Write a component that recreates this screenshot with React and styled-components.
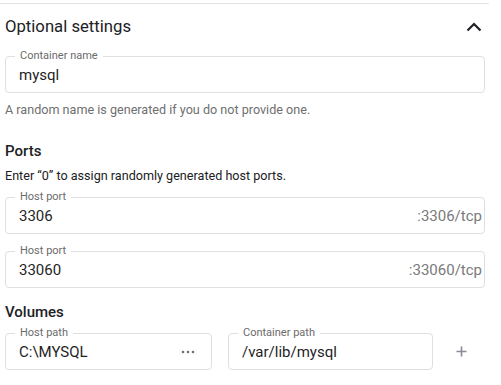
import React from 'react';
import styled, { createGlobalStyle } from 'styled-components';

const GlobalStyle = createGlobalStyle`
  body {
    margin: 0;
    background: #fff;
    font-family: Roboto, "Liberation Sans", Arial, sans-serif;
    color: #202124;
  }
`;

const Page = styled.div`
  width: 501px;
  height: 385px;
  overflow: hidden;
  padding: 3px 0 0 5px;
  box-sizing: border-box;
`;

const Divider = styled.div`
  height: 1px;
  width: 489px;
  margin-left: -5px;
  background: #e3e3e3;
`;

const Header = styled.div`
  display: flex;
  align-items: center;
  justify-content: space-between;
  width: 480px;
  margin-top: 13px;
  height: 20px;
`;

const Title = styled.h2`
  margin: 0;
  font-size: 16.7px;
  line-height: 20px;
  font-weight: 400;
  color: #202124;
`;

const Chevron = styled.svg`
  width: 16px;
  height: 10px;
  margin-right: 3px;
`;

const Section = styled.h3`
  margin: ${(p) => p.$top}px 0 0;
  font-size: 15px;
  line-height: 18px;
  font-weight: 500;
  color: #202124;
`;

const Note = styled.p`
  margin: ${(p) => p.$top}px 0 0;
  font-size: 12.6px;
  line-height: 16px;
  color: ${(p) => (p.$muted ? '#6f6f6f' : '#202124')};
`;

const Field = styled.div`
  position: relative;
  display: flex;
  align-items: center;
  box-sizing: border-box;
  width: ${(p) => p.$width || 480}px;
  height: 37px;
  margin-top: ${(p) => p.$top || 0}px;
  padding: 0 2px 0 13px;
  border: 1px solid #dfdfdf;
  border-radius: 4px;
  background: #fff;
`;

const Label = styled.span`
  position: absolute;
  left: 9px;
  top: -8px;
  padding: 0 5px;
  background: #fff;
  font-size: 11px;
  line-height: 13px;
  color: #6b6b6b;
`;

const Value = styled.span`
  flex: 1;
  font-size: 15px;
  line-height: 18px;
  color: #1f1f1f;
`;

const Suffix = styled.span`
  font-size: 15px;
  line-height: 18px;
  color: #7a7a7a;
`;

const Row = styled.div`
  display: flex;
  align-items: center;
  gap: 16px;
  margin-top: ${(p) => p.$top}px;
`;

const IconButton = styled.button`
  display: flex;
  align-items: center;
  justify-content: center;
  padding: 0;
  margin: 0;
  border: none;
  background: none;
  width: ${(p) => p.$size}px;
  height: ${(p) => p.$size}px;
  margin-right: ${(p) => p.$right || 0}px;
  margin-left: ${(p) => p.$left || 0}px;
  cursor: pointer;
`;

const TextField = ({ label, value, suffix, width, top, children }) => (
  <Field $width={width} $top={top}>
    <Label>{label}</Label>
    <Value>{value}</Value>
    {suffix && <Suffix>{suffix}</Suffix>}
    {children}
  </Field>
);

const App = () => {
  return (
    <>
      <GlobalStyle />
      <Page>
        <Divider />
        <Header>
          <Title>Optional settings</Title>
          <Chevron viewBox="0 0 16 10">
            <path d="M1.5 8.5 L8 2 L14.5 8.5" fill="none" stroke="#202124" strokeWidth="2.2" />
          </Chevron>
        </Header>

        <TextField label="Container name" value="mysql" top={19} />
        <Note $muted $top={9}>A random name is generated if you do not provide one.</Note>

        <Section $top={24}>Ports</Section>
        <Note $top={8}>Enter “0” to assign randomly generated host ports.</Note>
        <TextField label="Host port" value="3306" suffix=":3306/tcp" top={13} />
        <TextField label="Host port" value="33060" suffix=":33060/tcp" top={17} />

        <Section $top={15}>Volumes</Section>
        <Row $top={12}>
          <TextField label="Host path" value="C:\MYSQL" width={207}>
            <IconButton $size={16} $right={13} aria-label="Browse">
              <svg width="14" height="4" viewBox="0 0 14 4">
                <circle cx="2" cy="2" r="1.3" fill="#6f6f6f" />
                <circle cx="7" cy="2" r="1.3" fill="#6f6f6f" />
                <circle cx="12" cy="2" r="1.3" fill="#6f6f6f" />
              </svg>
            </IconButton>
          </TextField>
          <TextField label="Container path" value="/var/lib/mysql" width={205} />
          <IconButton $size={20} $left={2} aria-label="Add volume">
            <svg width="11" height="11" viewBox="0 0 11 11">
              <path d="M5.5 0.5 V10.5 M0.5 5.5 H10.5" stroke="#868b96" strokeWidth="1.6" />
            </svg>
          </IconButton>
        </Row>
      </Page>
    </>
  );
};

export default App;
